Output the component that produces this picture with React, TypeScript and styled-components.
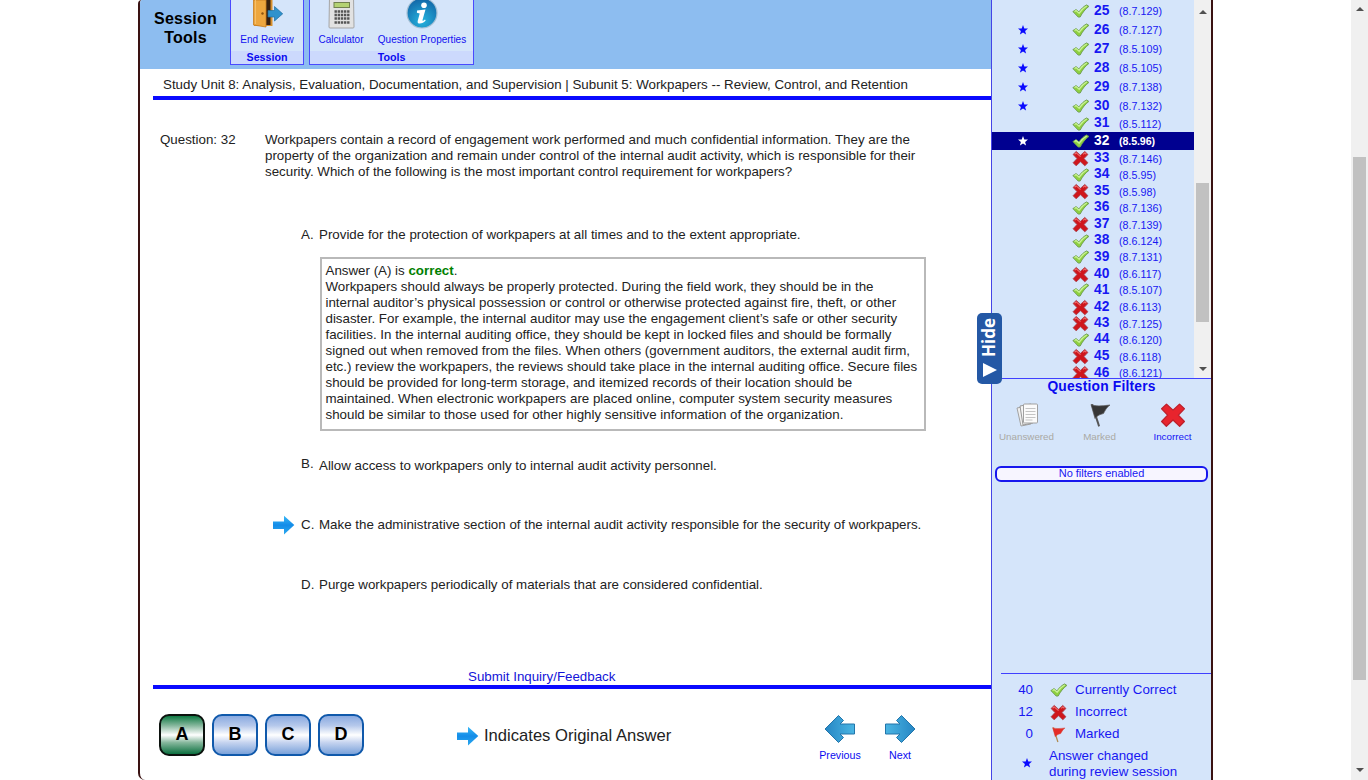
import React from "react";
import styled, { createGlobalStyle } from "styled-components";

const GlobalStyle = createGlobalStyle`
  * { box-sizing: border-box; }
  body { margin: 0; background: #fff; overflow: hidden; }
  button { font: inherit; padding: 0; }
`;

const Page = styled.div`
  display: flex;
  justify-content: space-between;
  width: 1368px;
  height: 780px;
  padding-left: 138px;
  overflow: hidden;
  font-family: "Liberation Sans", Arial, sans-serif;
  font-size: 13.333px;
  line-height: 16px;
  color: #222;
`;

const Frame = styled.div`
  display: flex;
  flex: none;
  width: 1075px;
  height: 780px;
  border: 2px solid #3a1212;
  border-top: 0;
  border-bottom: 0;
  border-radius: 4px 0 0 7px;
  background: #fff;
  overflow: hidden;
`;

const Main = styled.main`
  width: 851px;
  flex: none;
  display: flex;
  flex-direction: column;
`;

const Toolbar = styled.header`
  height: 69px;
  flex: none;
  display: flex;
  align-items: flex-start;
  background: #8dbdf0;
`;

const ToolbarTitle = styled.h1`
  margin: 0;
  width: 90px;
  padding: 9px 0 0 1px;
  font-size: 16px;
  line-height: 19px;
  letter-spacing: 0.2px;
  text-align: center;
  color: #000;
`;

const ToolGroup = styled.section<{ $w: number }>`
  width: ${(p) => p.$w}px;
  height: 65px;
  margin-right: 5px;
  display: flex;
  flex-direction: column;
  border: 1px solid #4a4aff;
  border-top: 0;
  background: #d5e5fa;
`;

const ToolRow = styled.div`
  flex: 1;
  display: flex;
`;

const Tool = styled.div<{ $w: number }>`
  width: ${(p) => p.$w}px;
  display: flex;
  flex-direction: column;
  align-items: center;
  font-size: 10px;
  line-height: 12px;
  white-space: nowrap;
  color: #1010f0;
  svg { display: block; margin-bottom: 4px; }
`;

const GroupName = styled.div`
  height: 13px;
  line-height: 12px;
  font-size: 10.67px;
  font-weight: bold;
  text-align: center;
  color: #0a0af0;
  background: #ccd9fd;
`;

const Breadcrumb = styled.div`
  margin-left: 13px;
  height: 31px;
  padding: 8px 0 0 10px;
  border-bottom: 4px solid #0a0aff;
  white-space: nowrap;
`;

const Body = styled.div`
  height: 589px;
  margin-left: 13px;
  display: flex;
  flex-direction: column;
  border-bottom: 4px solid #0a0aff;
`;

const QuestionRow = styled.div`
  display: flex;
  padding: 32px 0 0 7px;
  height: 127px;
`;

const QuestionLabel = styled.div`
  width: 105px;
`;

const Lines = styled.div`
  display: flex;
  flex-direction: column;
  white-space: nowrap;
`;

const Choice = styled.div`
  display: flex;
  height: 16px;
  padding-left: 119px;
  white-space: nowrap;
`;

const ChoiceMark = styled.span`
  width: 29px;
  height: 16px;
  display: flex;
  align-items: center;
`;

const ChoiceLetter = styled.span<{ $lift?: boolean }>`
  width: 18px;
  margin-top: ${(p) => (p.$lift ? "-2px" : "0")};
`;

const Gap = styled.div<{ $h: number }>`
  height: ${(p) => p.$h}px;
  flex: none;
`;

const Explanation = styled.div`
  width: 606px;
  height: 174px;
  margin: 14px 0 27px 167px;
  padding: 4px 0 0 3.5px;
  border: 2px solid #b9b9b9;
`;

const Verdict = styled.b`
  color: #008000;
`;

const Feedback = styled.a`
  margin: 76px 0 0 315px;
  color: #1414d8;
`;

const Footer = styled.footer`
  flex: 1;
  display: flex;
  padding: 25px 0 0 19px;
`;

const AnswerButton = styled.button<{ $right?: boolean }>`
  width: 46px;
  height: 42px;
  flex: none;
  margin-right: 7px;
  padding-bottom: 3px;
  border: 2px solid ${(p) => (p.$right ? "#0c120e" : "#1059ab")};
  border-radius: 10px;
  background: ${(p) =>
    p.$right
      ? "linear-gradient(#107a44 0%, #85b79c 25%, #fff 50%, #85b79c 70%, #0c7040 100%)"
      : "linear-gradient(#8aaae0 0%, #b5c8eb 25%, #fff 50%, #c5d3ef 70%, #7ba2da 100%)"};
  font-size: 18px;
  font-weight: bold;
  color: #000;
`;

const Legend = styled.div`
  display: flex;
  flex: none;
  align-items: center;
  height: 44px;
  width: 439px;
  padding-left: 85px;
  gap: 5px;
  font-size: 16.6px;
  white-space: nowrap;
`;

const NavButton = styled.div`
  width: 60px;
  flex: none;
  display: flex;
  flex-direction: column;
  align-items: center;
  font-size: 10.67px;
  line-height: 12px;
  color: #0a0af0;
  svg { margin-bottom: 5px; }
`;

const Sidebar = styled.aside`
  position: relative;
  width: 220px;
  flex: none;
  display: flex;
  flex-direction: column;
  border-left: 1px solid #4545e6;
  background: #d5e5fa;
  color: #1717f2;
`;

const ListArea = styled.div`
  height: 379px;
  flex: none;
  display: flex;
  border-bottom: 1px solid #4040ff;
`;

const List = styled.div`
  width: 203px;
  overflow: hidden;
  padding-top: 1.5px;
`;

const Row = styled.div<{ $star?: boolean; $current?: boolean }>`
  display: grid;
  grid-template-columns: 80px 22px 25px 1fr;
  align-items: center;
  height: ${(p) => (p.$current ? 18 : p.$star ? 19 : 16.52)}px;
  line-height: 16px;
  background: ${(p) => (p.$current ? "#000090" : "transparent")};
  color: ${(p) => (p.$current ? "#fff" : "#1717f2")};
`;

const RowStar = styled.span`
  padding-left: 24.5px;
  height: 12px;
  display: flex;
`;

const RowNumber = styled.span`
  margin-top: -1px;
  font-size: 13.8px;
  font-weight: bold;
`;

const RowCode = styled.span<{ $current?: boolean }>`
  font-size: 10.67px;
  font-weight: ${(p) => (p.$current ? "bold" : "normal")};
  letter-spacing: ${(p) => (p.$current ? "-0.1px" : "0.05px")};
`;

const ScrollTrack = styled.div<{ $pad: string }>`
  width: 17px;
  flex: none;
  display: flex;
  flex-direction: column;
  align-items: center;
  padding: ${(p) => p.$pad};
  background: #f0f0f0;
`;

const Thumb = styled.div<{ $before: number; $h: number }>`
  width: 13px;
  height: ${(p) => p.$h}px;
  margin: ${(p) => p.$before}px 0 auto;
  background: #c1c1c1;
`;

const Arrow = styled.i<{ $down?: boolean }>`
  border: 4px solid transparent;
  ${(p) => (p.$down ? "border-top: 4px solid #505050; border-bottom: 0;" : "border-bottom: 4px solid #505050; border-top: 0;")}
`;

const HideTab = styled.div`
  position: absolute;
  left: -15px;
  top: 313px;
  width: 25px;
  height: 71px;
  border-radius: 5px;
  background: #2458a5;
  display: flex;
  flex-direction: column;
  align-items: center;
  padding-top: 5px;
  color: #fff;
`;

const HideText = styled.span`
  writing-mode: vertical-rl;
  transform: rotate(180deg);
  height: 43px;
  margin-right: 2px;
  text-align: right;
  font: bold 17px/22px "Open Sans", sans-serif;
`;

const FilterTitle = styled.h2`
  margin: 0;
  height: 23px;
  font-size: 13.8px;
  line-height: 15px;
  letter-spacing: 0.2px;
  text-align: center;
  color: #0a0af0;
`;

const Filters = styled.div`
  height: 63px;
  display: flex;
`;

const Filter = styled.div<{ $off?: boolean }>`
  width: 73px;
  display: flex;
  flex-direction: column;
  align-items: center;
  margin-left: -2px;
  margin-right: 2px;
  font-size: 9.8px;
  line-height: 12px;
  color: ${(p) => (p.$off ? "#aaa9a4" : "#1414f4")};
  svg { display: block; margin-bottom: 3px; }
`;

const FilterStatus = styled.div`
  margin: 1px 3px 0;
  height: 16px;
  border: 2px solid #1717ee;
  border-radius: 6px;
  background: #f7f5ff;
  font-size: 11px;
  line-height: 11px;
  text-align: center;
`;

const Totals = styled.div`
  margin: auto 0 0 9px;
  height: 107px;
  flex: none;
  border-top: 1px solid #4040ff;
  padding-top: 5px;
`;

const Total = styled.div`
  display: grid;
  grid-template-columns: 32px 42px 1fr;
  align-items: center;
  height: 22px;
  > :first-child { text-align: right; }
  svg { display: block; margin-left: 17px; }
`;

const Changed = styled.div`
  display: flex;
  padding: 3px 0 0 20px;
  gap: 16px;
  white-space: nowrap;
  svg { margin-top: 9px; flex: none; }
`;

const Star = ({ color = "#0a0aff" }: { color?: string }) => (
  <svg width="12" height="12" viewBox="0 0 12 12">
    <path d="M6 1l1.3 3.4 3.7.2-2.9 2.3 1 3.6L6 8.5l-3.100 2 1-3.600L1 4.600l3.700-.2z" fill={color} />
  </svg>
);

const Check = () => (
  <svg width="18" height="16" viewBox="0 0 18 16">
    <path d="M.9 8.600L4 6.600l3 2.300c2-3 4.600-5.500 7.600-7l2.300 1.500c-3.600 2.700-6.500 6.200-8.700 10.600l-2 .1z" fill="#8ed03f" stroke="#6c9a52" strokeWidth=".9" strokeLinejoin="round" />
    <path d="M2.500 8.500L4 7.600l3.200 2.600c2-3 4.500-5.500 7.500-7.200" fill="none" stroke="#c9f297" strokeWidth="1.300" />
  </svg>
);

const Cross = ({ size = 17, flat = false }: { size?: number; flat?: boolean }) => (
  <svg width={size} height={size} viewBox="0 0 16 16">
    <path
      d="M4 1.300l4 3.700 4-3.700 3 2.900-3.700 3.900 3.700 3.900-2.900 2.900-4.100-3.800-4.100 3.800L1 12l3.700-3.900L1 4.200z"
      fill={flat ? "#e8242d" : "#cf161c"}
      stroke={flat ? "#bd202b" : "#a84450"}
      strokeWidth=".8"
      strokeLinejoin="round"
    />
    {!flat && <path d="M2.500 4l1.500-1.300L8 6.300" fill="none" stroke="#ee7070" strokeWidth="1" />}
    {!flat && <path d="M10.500 4.200L12 2.700 13.500 4" fill="none" stroke="#ee7070" strokeWidth="1" />}
  </svg>
);

const Flag = ({ dark = false }: { dark?: boolean }) => (
  <svg width={dark ? 26 : 17} height={dark ? 26 : 17} viewBox="0 0 26 26">
    <path d="M4 2.500l2-.5 7 22-1.800.8z" fill={dark ? "#555" : "#b18b51"} />
    <path d="M4 2.500c5 2 10 1.500 19 .5-4 3-5 6-6.500 8.500-3 1-6 1.500-8.500 5z" fill={dark ? "#363636" : "#e52c28"} stroke={dark ? "#5d5d5d" : "#d04a3e"} strokeWidth=".7" />
  </svg>
);

const Papers = () => (
  <svg width="26" height="26" viewBox="0 0 26 26">
    <path d="M3 6l10-2 4 18-10 2z" fill="#efefef" stroke="#a2a2a2" />
    <path d="M6 4l11-2 2 19-10 2z" fill="#f5f5f5" stroke="#999" />
    <rect x="9.500" y="2" width="14" height="19" rx="1" fill="#fbfbfb" stroke="#a0a0a0" />
    <path d="M11.500 6.500h10m-10 3h10m-10 3h10m-10 3h10m-10 2.500h7" stroke="#c4c4c4" />
  </svg>
);

const AnswerArrow = () => (
  <svg width="23" height="20" viewBox="0 0 23 20">
    <defs>
      <linearGradient id="answer-arrow" x2="0" y2="1">
        <stop offset="0" stopColor="#39b9f7" />
        <stop offset=".5" stopColor="#148ce8" />
        <stop offset="1" stopColor="#2ba9ef" />
      </linearGradient>
    </defs>
    <path d="M1 6.500h11V.800L22.300 10 12 19.400V14H1z" fill="url(#answer-arrow)" />
  </svg>
);

const NavArrow = ({ left = false }: { left?: boolean }) => (
  <svg width="32" height="30" viewBox="0 0 32 30">
    <defs>
      <linearGradient id="nav-arrow">
        <stop offset="0" stopColor="#4ab5e3" />
        <stop offset="1" stopColor="#2686c4" />
      </linearGradient>
    </defs>
    <path
      d="M1.500 10h14.500l-3.500-3.500L17.500 1.500 31 15 17.500 28.500l-5-5L16 20H1.500z"
      transform={left ? "matrix(-1 0 0 1 32 0)" : undefined}
      fill="url(#nav-arrow)"
      stroke="#2275aa"
      strokeLinejoin="round"
    />
  </svg>
);

const Door = () => (
  <svg width="32" height="30" viewBox="0 0 32 30">
    <path d="M3 0h18.500v26H3z" fill="#d8902c" />
    <path d="M13 0h6.500v25H13z" fill="#37200f" />
    <path d="M2.500 0H15v27L2.500 25z" fill="#eda63e" stroke="#c57b1e" strokeWidth=".8" />
    <path d="M4.500 0v24" stroke="#f6bf68" />
    <circle cx="11.500" cy="13.500" r="1.200" fill="#8a530f" />
    <path d="M17 10.500h6.500V6.500l8.200 7.300-8.200 7.200v-4H17z" fill="#2f92cc" stroke="#206f9f" strokeWidth=".7" />
  </svg>
);

const Calculator = () => (
  <svg width="28" height="30" viewBox="0 0 28 30">
    <path d="M2.500-4h24l.5 31a1 1 0 0 1-1 1h-23a1 1 0 0 1-1-1z" fill="#e2e2e2" stroke="#a5a5a5" />
    <rect x="7" y="2.500" width="15.500" height="5" fill="#b4d273" stroke="#71804f" />
    {[11.5, 15, 18.5, 22.5].map((y) => (
      <path key={y} d={`M7.500 ${y}h15`} stroke="#555" strokeWidth="2.600" strokeDasharray="2.400 .750" />
    ))}
  </svg>
);

const Info = () => (
  <svg width="34" height="30" viewBox="0 0 34 30">
    <defs>
      <radialGradient id="info" cx=".5" cy=".75" r=".75">
        <stop offset="0" stopColor="#25b4df" />
        <stop offset="1" stopColor="#1265a6" />
      </radialGradient>
    </defs>
    <circle cx="17" cy="13" r="15" fill="url(#info)" stroke="#a4bfd4" strokeWidth="1.200" />
    <circle cx="19" cy="5.300" r="2.800" fill="#fff" />
    <path d="M12 10.500l8.500-1-3 10.500c-.3 1.300.8 1 2.500-.5l.7 1c-2.500 3.200-9 4.500-8 .400l2-7.500-2.800-.7z" fill="#fff" />
  </svg>
);

const rows: [number, string, boolean, boolean][] = [
  [25, "8.7.129", true, false],
  [26, "8.7.127", true, true],
  [27, "8.5.109", true, true],
  [28, "8.5.105", true, true],
  [29, "8.7.138", true, true],
  [30, "8.7.132", true, true],
  [31, "8.5.112", true, false],
  [32, "8.5.96", true, true],
  [33, "8.7.146", false, false],
  [34, "8.5.95", true, false],
  [35, "8.5.98", false, false],
  [36, "8.7.136", true, false],
  [37, "8.7.139", false, false],
  [38, "8.6.124", true, false],
  [39, "8.7.131", true, false],
  [40, "8.6.117", false, false],
  [41, "8.5.107", true, false],
  [42, "8.6.113", false, false],
  [43, "8.7.125", false, false],
  [44, "8.6.120", true, false],
  [45, "8.6.118", false, false],
  [46, "8.6.121", false, false],
];

const question = [
  "Workpapers contain a record of engagement work performed and much confidential information. They are the",
  "property of the organization and remain under control of the internal audit activity, which is responsible for their",
  "security. Which of the following is the most important control requirement for workpapers?",
];

const explanation = [
  "Workpapers should always be properly protected. During the field work, they should be in the",
  "internal auditor’s physical possession or control or otherwise protected against fire, theft, or other",
  "disaster. For example, the internal auditor may use the engagement client’s safe or other security",
  "facilities. In the internal auditing office, they should be kept in locked files and should be formally",
  "signed out when removed from the files. When others (government auditors, the external audit firm,",
  "etc.) review the workpapers, the reviews should take place in the internal auditing office. Secure files",
  "should be provided for long-term storage, and itemized records of their location should be",
  "maintained. When electronic workpapers are placed online, computer system security measures",
  "should be similar to those used for other highly sensitive information of the organization.",
];

export default function App() {
  return (
    <Page>
      <GlobalStyle />
      <Frame>
        <Main>
          <Toolbar>
            <ToolbarTitle>Session<br />Tools</ToolbarTitle>
            <ToolGroup $w={74}>
              <ToolRow><Tool $w={72}><Door />End Review</Tool></ToolRow>
              <GroupName>Session</GroupName>
            </ToolGroup>
            <ToolGroup $w={165}>
              <ToolRow>
                <Tool $w={62}><Calculator />Calculator</Tool>
                <Tool $w={100}><Info />Question Properties</Tool>
              </ToolRow>
              <GroupName>Tools</GroupName>
            </ToolGroup>
          </Toolbar>
          <Breadcrumb>
            Study Unit 8: Analysis, Evaluation, Documentation, and Supervision | Subunit 5: Workpapers -- Review, Control, and Retention
          </Breadcrumb>
          <Body>
            <QuestionRow>
              <QuestionLabel>Question: 32</QuestionLabel>
              <Lines>{question.map((l) => <span key={l}>{l}</span>)}</Lines>
            </QuestionRow>
            <Choice>
              <ChoiceMark /><ChoiceLetter>A.</ChoiceLetter>
              Provide for the protection of workpapers at all times and to the extent appropriate.
            </Choice>
            <Explanation>
              <Lines>
                <span>Answer (A) is <Verdict>correct</Verdict>.</span>
                {explanation.map((l) => <span key={l}>{l}</span>)}
              </Lines>
            </Explanation>
            <Choice>
              <ChoiceMark /><ChoiceLetter $lift>B.</ChoiceLetter>
              Allow access to workpapers only to internal audit activity personnel.
            </Choice>
            <Gap $h={43} />
            <Choice>
              <ChoiceMark><AnswerArrow /></ChoiceMark><ChoiceLetter>C.</ChoiceLetter>
              Make the administrative section of the internal audit activity responsible for the security of workpapers.
            </Choice>
            <Gap $h={44} />
            <Choice>
              <ChoiceMark /><ChoiceLetter>D.</ChoiceLetter>
              Purge workpapers periodically of materials that are considered confidential.
            </Choice>
            <Feedback>Submit Inquiry/Feedback</Feedback>
          </Body>
          <Footer>
            <AnswerButton $right>A</AnswerButton>
            <AnswerButton>B</AnswerButton>
            <AnswerButton>C</AnswerButton>
            <AnswerButton>D</AnswerButton>
            <Legend><AnswerArrow />Indicates Original Answer</Legend>
            <NavButton><NavArrow left />Previous</NavButton>
            <NavButton><NavArrow />Next</NavButton>
          </Footer>
        </Main>
        <Sidebar>
          <ListArea>
            <List>
              {rows.map(([n, code, ok, star]) => (
                <Row key={n} $star={star || n === 25} $current={n === 32}>
                  <RowStar>{star && <Star color={n === 32 ? "#fff" : undefined} />}</RowStar>
                  {ok ? <Check /> : <Cross />}
                  <RowNumber>{n}</RowNumber>
                  <RowCode $current={n === 32}>({code})</RowCode>
                </Row>
              ))}
            </List>
            <ScrollTrack $pad="10px 0 7px">
              <Arrow />
              <Thumb $before={169} $h={139} />
              <Arrow $down />
            </ScrollTrack>
          </ListArea>
          <FilterTitle>Question Filters</FilterTitle>
          <Filters>
            <Filter $off><Papers />Unanswered</Filter>
            <Filter $off><Flag dark />Marked</Filter>
            <Filter><Cross size={26} flat />Incorrect</Filter>
          </Filters>
          <FilterStatus>No filters enabled</FilterStatus>
          <Totals>
            <Total><span>40</span><Check /><span>Currently Correct</span></Total>
            <Total><span>12</span><Cross /><span>Incorrect</span></Total>
            <Total><span>0</span><Flag /><span>Marked</span></Total>
            <Changed><Star /><span>Answer changed<br />during review session</span></Changed>
          </Totals>
          <HideTab>
            <HideText>Hide</HideText>
            <svg width="16" height="18" viewBox="0 0 16 18"><path d="M1 2l14 7-14 7z" fill="#fff" /></svg>
          </HideTab>
        </Sidebar>
      </Frame>
      <ScrollTrack $pad="7px 0 8px">
        <Arrow />
        <Thumb $before={146} $h={523} />
        <Arrow $down />
      </ScrollTrack>
    </Page>
  );
}
